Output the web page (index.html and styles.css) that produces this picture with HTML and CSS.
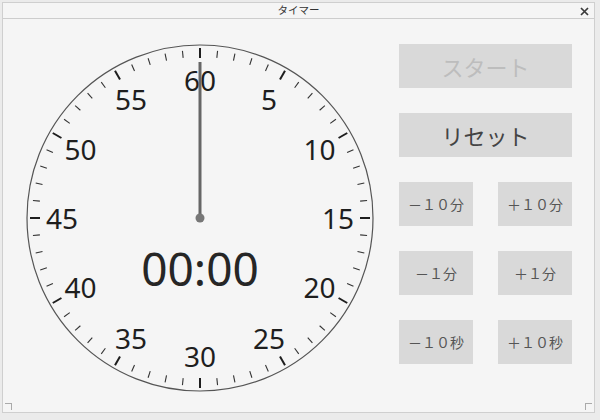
FILE: index.html
```html
<!DOCTYPE html>
<html lang="ja">
<head>
<meta charset="utf-8">
<title>タイマー</title>
<link rel="stylesheet" href="styles.css">
</head>
<body>
<div class="window">
  <div class="titlebar">
    <span class="title">タイマー</span>
    <svg class="close" width="9" height="9" viewBox="0 0 9 9"><path d="M1 1L8 8M8 1L1 8" stroke="#3a3a3a" stroke-width="1.7"/></svg>
  </div>
  <div class="content">
    <svg class="dial" width="360" height="360" viewBox="0 0 360 360">
      <circle cx="180" cy="180" r="173" fill="none" stroke="#555" stroke-width="1.2"/>
      <g class="major">
        <line x1="180" y1="10" x2="180" y2="20" transform="rotate(0 180 180)"/>
        <line x1="180" y1="10" x2="180" y2="20" transform="rotate(30 180 180)"/>
        <line x1="180" y1="10" x2="180" y2="20" transform="rotate(60 180 180)"/>
        <line x1="180" y1="10" x2="180" y2="20" transform="rotate(90 180 180)"/>
        <line x1="180" y1="10" x2="180" y2="20" transform="rotate(120 180 180)"/>
        <line x1="180" y1="10" x2="180" y2="20" transform="rotate(150 180 180)"/>
        <line x1="180" y1="10" x2="180" y2="20" transform="rotate(180 180 180)"/>
        <line x1="180" y1="10" x2="180" y2="20" transform="rotate(210 180 180)"/>
        <line x1="180" y1="10" x2="180" y2="20" transform="rotate(240 180 180)"/>
        <line x1="180" y1="10" x2="180" y2="20" transform="rotate(270 180 180)"/>
        <line x1="180" y1="10" x2="180" y2="20" transform="rotate(300 180 180)"/>
        <line x1="180" y1="10" x2="180" y2="20" transform="rotate(330 180 180)"/>
      </g>
      <g class="minor">
        <line x1="180" y1="12" x2="180" y2="19" transform="rotate(6 180 180)"/>
        <line x1="180" y1="12" x2="180" y2="19" transform="rotate(12 180 180)"/>
        <line x1="180" y1="12" x2="180" y2="19" transform="rotate(18 180 180)"/>
        <line x1="180" y1="12" x2="180" y2="19" transform="rotate(24 180 180)"/>
        <line x1="180" y1="12" x2="180" y2="19" transform="rotate(36 180 180)"/>
        <line x1="180" y1="12" x2="180" y2="19" transform="rotate(42 180 180)"/>
        <line x1="180" y1="12" x2="180" y2="19" transform="rotate(48 180 180)"/>
        <line x1="180" y1="12" x2="180" y2="19" transform="rotate(54 180 180)"/>
        <line x1="180" y1="12" x2="180" y2="19" transform="rotate(66 180 180)"/>
        <line x1="180" y1="12" x2="180" y2="19" transform="rotate(72 180 180)"/>
        <line x1="180" y1="12" x2="180" y2="19" transform="rotate(78 180 180)"/>
        <line x1="180" y1="12" x2="180" y2="19" transform="rotate(84 180 180)"/>
        <line x1="180" y1="12" x2="180" y2="19" transform="rotate(96 180 180)"/>
        <line x1="180" y1="12" x2="180" y2="19" transform="rotate(102 180 180)"/>
        <line x1="180" y1="12" x2="180" y2="19" transform="rotate(108 180 180)"/>
        <line x1="180" y1="12" x2="180" y2="19" transform="rotate(114 180 180)"/>
        <line x1="180" y1="12" x2="180" y2="19" transform="rotate(126 180 180)"/>
        <line x1="180" y1="12" x2="180" y2="19" transform="rotate(132 180 180)"/>
        <line x1="180" y1="12" x2="180" y2="19" transform="rotate(138 180 180)"/>
        <line x1="180" y1="12" x2="180" y2="19" transform="rotate(144 180 180)"/>
        <line x1="180" y1="12" x2="180" y2="19" transform="rotate(156 180 180)"/>
        <line x1="180" y1="12" x2="180" y2="19" transform="rotate(162 180 180)"/>
        <line x1="180" y1="12" x2="180" y2="19" transform="rotate(168 180 180)"/>
        <line x1="180" y1="12" x2="180" y2="19" transform="rotate(174 180 180)"/>
        <line x1="180" y1="12" x2="180" y2="19" transform="rotate(186 180 180)"/>
        <line x1="180" y1="12" x2="180" y2="19" transform="rotate(192 180 180)"/>
        <line x1="180" y1="12" x2="180" y2="19" transform="rotate(198 180 180)"/>
        <line x1="180" y1="12" x2="180" y2="19" transform="rotate(204 180 180)"/>
        <line x1="180" y1="12" x2="180" y2="19" transform="rotate(216 180 180)"/>
        <line x1="180" y1="12" x2="180" y2="19" transform="rotate(222 180 180)"/>
        <line x1="180" y1="12" x2="180" y2="19" transform="rotate(228 180 180)"/>
        <line x1="180" y1="12" x2="180" y2="19" transform="rotate(234 180 180)"/>
        <line x1="180" y1="12" x2="180" y2="19" transform="rotate(246 180 180)"/>
        <line x1="180" y1="12" x2="180" y2="19" transform="rotate(252 180 180)"/>
        <line x1="180" y1="12" x2="180" y2="19" transform="rotate(258 180 180)"/>
        <line x1="180" y1="12" x2="180" y2="19" transform="rotate(264 180 180)"/>
        <line x1="180" y1="12" x2="180" y2="19" transform="rotate(276 180 180)"/>
        <line x1="180" y1="12" x2="180" y2="19" transform="rotate(282 180 180)"/>
        <line x1="180" y1="12" x2="180" y2="19" transform="rotate(288 180 180)"/>
        <line x1="180" y1="12" x2="180" y2="19" transform="rotate(294 180 180)"/>
        <line x1="180" y1="12" x2="180" y2="19" transform="rotate(306 180 180)"/>
        <line x1="180" y1="12" x2="180" y2="19" transform="rotate(312 180 180)"/>
        <line x1="180" y1="12" x2="180" y2="19" transform="rotate(318 180 180)"/>
        <line x1="180" y1="12" x2="180" y2="19" transform="rotate(324 180 180)"/>
        <line x1="180" y1="12" x2="180" y2="19" transform="rotate(336 180 180)"/>
        <line x1="180" y1="12" x2="180" y2="19" transform="rotate(342 180 180)"/>
        <line x1="180" y1="12" x2="180" y2="19" transform="rotate(348 180 180)"/>
        <line x1="180" y1="12" x2="180" y2="19" transform="rotate(354 180 180)"/>
      </g>
      <g class="nums">
        <text x="180" y="42">60</text>
        <text x="249" y="60.5">5</text>
        <text x="299.5" y="111">10</text>
        <text x="318" y="180">15</text>
        <text x="299.5" y="249">20</text>
        <text x="249" y="299.5">25</text>
        <text x="180" y="318">30</text>
        <text x="111" y="299.5">35</text>
        <text x="60.5" y="249">40</text>
        <text x="42" y="180">45</text>
        <text x="60.5" y="111">50</text>
        <text x="111" y="60.5">55</text>
      </g>
      <text class="time" x="180" y="230">00:00</text>
      <line class="hand" x1="180" y1="180" x2="180" y2="24"/>
      <circle cx="180" cy="180" r="4.5" fill="#777"/>
    </svg>
    <div class="controls">
      <button class="btn big disabled">スタート</button>
      <button class="btn big">リセット</button>
      <div class="grid">
        <button class="btn small">－１０分</button>
        <button class="btn small">＋１０分</button>
        <button class="btn small">－１分</button>
        <button class="btn small">＋１分</button>
        <button class="btn small">－１０秒</button>
        <button class="btn small">＋１０秒</button>
      </div>
    </div>
  </div>
  <span class="grip grip-left"></span>
  <span class="grip grip-right"></span>
</div>
</body>
</html>
```
FILE: styles.css
```css
html, body {
  margin: 0;
  padding: 0;
  background: #ebebeb;
  width: 600px;
  height: 420px;
  overflow: hidden;
  font-family: "Noto Sans", "Noto Sans CJK JP", sans-serif;
}

.window {
  position: relative;
  margin: 2px 3px 0 2px;
  width: 593px;
  height: 411px;
  border: 1px solid #cfcfcf;
  background: #f5f5f5;
  box-sizing: border-box;
  display: flex;
  flex-direction: column;
}

.titlebar {
  height: 16px;
  flex: none;
  border-bottom: 1px solid #cdcdcd;
  display: flex;
  align-items: center;
  justify-content: center;
  position: relative;
  box-sizing: border-box;
}

.title {
  font-family: "Noto Sans CJK JP", sans-serif;
  font-size: 10.5px;
  color: #333;
  line-height: 1;
}

.close {
  position: absolute;
  right: 5px;
  top: 4px;
}

.content {
  flex: 1;
  display: flex;
  align-items: flex-start;
}

.dial {
  display: block;
  margin: 19px 0 0 17px;
  flex: none;
}

.major line {
  stroke: #1e1e1e;
  stroke-width: 2;
}

.minor line {
  stroke: #333;
  stroke-width: 1.1;
}

.nums text {
  font-family: "Noto Sans", sans-serif;
  font-size: 28px;
  fill: #1e1e1e;
  text-anchor: middle;
  dominant-baseline: central;
}

.time {
  font-family: "Noto Sans", sans-serif;
  font-size: 46px;
  fill: #262626;
  text-anchor: middle;
  dominant-baseline: central;
}

.hand {
  stroke: #666;
  stroke-width: 3;
}

.controls {
  margin: 25px 0 0 19px;
  width: 173px;
  display: flex;
  flex-direction: column;
  gap: 25px;
}

.btn {
  border: none;
  margin: 0;
  padding: 0;
  background: #d9d9d9;
  font-family: "Noto Sans CJK JP", sans-serif;
  height: 44px;
  color: #444;
}

.big {
  width: 173px;
  font-size: 22px;
}

.disabled {
  color: #bdbdbd;
}

.grid {
  display: grid;
  grid-template-columns: 74px 74px;
  column-gap: 25px;
  row-gap: 25px;
}

.small {
  width: 74px;
  font-size: 14px;
  color: #555;
}

.grip {
  position: absolute;
  bottom: 2px;
  width: 6px;
  height: 6px;
  border-top: 1px solid #aaa;
}

.grip-left {
  left: 2px;
  border-right: 1px solid #aaa;
}

.grip-right {
  right: 2px;
  border-left: 1px solid #aaa;
}
```
